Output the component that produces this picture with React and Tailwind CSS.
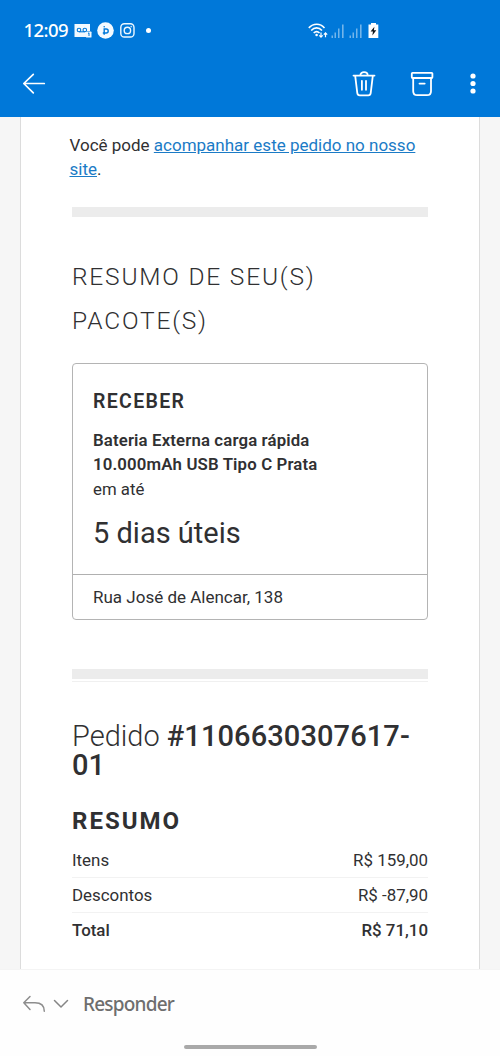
const rows = [
  { label: "Itens", value: "R$ 159,00" },
  { label: "Descontos", value: "R$ -87,90" },
];

function SignalIcon() {
  return (
    <svg className="h-[14px] w-[14px]" viewBox="0 0 14 14" fill="#fff" fillOpacity="0.45">
      <rect x="0.5" y="11.5" width="1.5" height="2.5" />
      <rect x="3.5" y="8.5" width="1.5" height="5.5" />
      <rect x="7" y="4.5" width="1.5" height="9.5" />
      <rect x="11" y="0.5" width="1.6" height="13.5" />
    </svg>
  );
}

function StatusBar() {
  return (
    <div className="flex h-[61px] items-center pl-[23.5px] text-white">
      <span className="-mt-[2px] w-[50.5px] font-['Noto_Sans',sans-serif] text-[18.5px] font-medium leading-6 tracking-[-0.6px]">12:09</span>
      <svg className="h-[15px] w-[18px]" viewBox="0 0 18 15">
        <path d="M0.5 1H16V8H12V14H0.5Z" fill="#f1f9ff" />
        <g fill="none" stroke="#0078d9" strokeWidth="1.1">
          <circle cx="5" cy="7" r="1.8" />
          <circle cx="10.8" cy="7" r="1.8" />
          <path d="M5 8.8H10.8" />
        </g>
        <rect x="12" y="8.6" width="5.5" height="6" rx="0.7" fill="#f1f9ff" />
        <path d="M14 10.5L15 9.8V13" fill="none" stroke="#0078d9" strokeWidth="1" />
      </svg>
      <svg className="ml-[4.5px] h-[17px] w-[17px]" viewBox="0 0 17 17">
        <circle cx="8.5" cy="8.5" r="8.3" fill="#f4faff" />
        <path d="M7.2 12.8V7H9.2a2 2 0 0 1 0 4H7.2M7.2 11H5.8" fill="none" stroke="#0078d9" strokeWidth="1.4" />
        <circle cx="7.2" cy="4.8" r="0.8" fill="#0078d9" />
      </svg>
      <svg className="ml-[6px] h-[15px] w-[15px]" viewBox="0 0 15 15" fill="none" stroke="#eef8ff" strokeWidth="1.4">
        <rect x="0.8" y="0.8" width="13.2" height="13.2" rx="3.6" />
        <circle cx="7.4" cy="7.4" r="3.2" />
        <circle cx="11.2" cy="3.7" r="0.4" strokeWidth="0.9" />
      </svg>
      <span className="ml-[11.5px] h-[5px] w-[5px] rounded-full bg-white" />
      <svg className="ml-[156.5px] h-[16px] w-[20px]" viewBox="0 0 20 16">
        <g fill="none" stroke="#fff" strokeWidth="1.6">
          <path d="M0.8 4.9C5.2 0 12.3 0 16.5 4.9" />
          <path d="M3.2 7.5C6.4 4 10.8 4 14 7.5" />
          <path d="M5.7 10C7.7 8 9.5 8 11.5 10" />
        </g>
        <circle cx="8.6" cy="12" r="1.3" fill="#fff" />
        <path d="M13 9.5V14M11.3 12.4L13 14.2L14.7 12.4M17.5 14.3V10M15.8 11.6L17.5 9.8L19.2 11.6" fill="none" stroke="#fff" strokeWidth="1.2" />
      </svg>
      <div className="ml-[3px] flex items-center gap-1">
        <SignalIcon />
        <SignalIcon />
      </div>
      <svg className="ml-[5px] h-[15px] w-[11px]" viewBox="0 0 11 15">
        <path d="M3 0H8V1.5H10.3V15H0.5V1.5H3Z" fill="#fff" />
        <path d="M6.4 3.7L2.6 8.5H5L4.3 12.4L8.3 7.3H5.9Z" fill="#10161c" />
      </svg>
    </div>
  );
}

function Toolbar() {
  return (
    <div className="flex h-14 items-start justify-between pl-[22px] pr-[24px] pt-[9px] text-white">
      <svg className="mt-[3px] h-[22px] w-6" viewBox="0 0 24 22" fill="none" stroke="currentColor" strokeWidth="1.7" strokeLinecap="round" strokeLinejoin="round">
        <path d="M22.3 10.5H1.8M11.3 1.3L1.8 10.5L11.3 19.8" />
      </svg>
      <div className="flex items-start">
        <svg className="h-[28px] w-[24px]" viewBox="0 0 24 28" fill="none" stroke="currentColor" strokeWidth="1.8" strokeLinecap="round" strokeLinejoin="round">
          <path d="M1.5 5.6H22.5M3.2 5.8L5.3 23.2Q5.6 25.3 7.7 25.3H16.3Q18.4 25.3 18.7 23.2L20.8 5.8M8.3 5.4C8.3 1 15.7 1 15.7 5.4M9.9 10.8V19.8M14 10.8V19.8" />
        </svg>
        <svg className="ml-[34px] h-[28px] w-[24px]" viewBox="0 0 24 28" fill="none" stroke="currentColor" strokeWidth="1.8" strokeLinecap="round" strokeLinejoin="round">
          <rect x="1.8" y="2.8" width="20.6" height="5.2" rx="0.7" />
          <path d="M3.2 8V21.2Q3.2 25.2 7.2 25.2H17Q21 25.2 21 21.2V8M9.5 13.6H14.7" />
        </svg>
        <svg className="ml-[36px] mt-[3px] h-[22px] w-[6px]" viewBox="0 0 6 22" fill="currentColor">
          <circle cx="3" cy="3" r="2.6" />
          <circle cx="3" cy="10.5" r="2.6" />
          <circle cx="3" cy="18" r="2.6" />
        </svg>
      </div>
    </div>
  );
}

function PackageCard() {
  return (
    <section className="mt-[21px] h-[257px] rounded-[4px] border border-[#b4b4b4]">
      <div className="h-[211px] border-b border-[#b0b0b0] pl-5 pt-[26px]">
        <h3 className="text-[19.5px] font-semibold leading-6 tracking-[1.35px]">RECEBER</h3>
        <p className="mt-[14px] text-[16.8px] font-semibold leading-[24.4px] tracking-[0.14px]">
          Bateria Externa carga rápida
          <br />
          10.000mAh USB Tipo C Prata
        </p>
        <p className="text-[16.8px] leading-[24.4px]">em até</p>
        <p className="mt-[17px] text-[29px] leading-[30px]">5 dias úteis</p>
      </div>
      <p className="pl-5 pt-[10px] text-[17px] leading-6">Rua José de Alencar, 138</p>
    </section>
  );
}

export default function App() {
  return (
    <div className="flex h-[1056px] w-[500px] flex-col overflow-hidden bg-[#f6f6f6] font-[Roboto,sans-serif] text-[#303032]">
      <header className="h-[117px] shrink-0 bg-[#0078d9]">
        <StatusBar />
        <Toolbar />
      </header>

      <main className="mx-[20px] h-[852px] shrink-0 border-x border-[#dcdcdc] bg-white pl-[51px] pr-[51px]">
        <p className="-ml-[2.5px] pt-[16px] text-[17px] leading-[24px]">
          Você pode <a className="text-[#1b7bc6] underline">acompanhar este pedido no nosso</a>
          <br />
          <a className="text-[#1b7bc6] underline">site</a>.
        </p>
        <div className="mt-[26px] h-[10px] bg-[#ececec]" />
        <h1 className="mt-[38px] text-[24.5px] font-light leading-[43.5px] tracking-[1.8px]">
          RESUMO DE SEU(S)
          <br />
          PACOTE(S)
        </h1>
        <PackageCard />
        <div className="mt-[49px] h-[10px] bg-[#ececec]" />
        <div className="mt-[2px] h-px bg-[#f0f0f0]" />
        <h2 className="mt-[40px] text-[29px] leading-[29.4px]">
          <span className="font-light">Pedido </span>
          <span className="font-medium tracking-[0.1px]">
            #1106630307617-
            <br />
            01
          </span>
        </h2>
        <h3 className="mt-[25px] text-[24px] font-bold leading-[30px] tracking-[2px]">RESUMO</h3>
        <dl className="mt-[7px] text-[16.9px]">
          {rows.map((row) => (
            <div key={row.label} className="flex h-[35px] items-center justify-between border-b border-[#f2f2f2] pt-px">
              <dt>{row.label}</dt>
              <dd>{row.value}</dd>
            </div>
          ))}
          <div className="flex h-[35px] items-center justify-between font-medium">
            <dt>Total</dt>
            <dd>R$ 71,10</dd>
          </div>
        </dl>
      </main>

      <footer className="flex flex-1 flex-col items-center border-t border-[#f4f4f4] bg-[#fefefe]">
        <div className="flex h-[68px] w-full items-center pl-[22px] text-[#6e6e6e]">
          <svg className="h-[18px] w-6" viewBox="0 0 24 18" fill="none" stroke="#8d8d8d" strokeWidth="1.5" strokeLinecap="round" strokeLinejoin="round">
            <path d="M8 1.5L1.8 7.8L8 14.5M1.8 7.8H13C18.5 7.8 22.3 10.5 22.3 16.3" />
          </svg>
          <svg className="ml-[7px] h-[10px] w-4" viewBox="0 0 16 10" fill="none" stroke="#858585" strokeWidth="1.5" strokeLinecap="round" strokeLinejoin="round">
            <path d="M1.5 1.5L8 8L14.5 1.5" />
          </svg>
          <span className="ml-[14px] font-['Noto_Sans',sans-serif] text-[19px] font-medium leading-6 tracking-[-0.8px]">Responder</span>
        </div>
        <div className="mt-[7px] h-[4px] w-[133px] rounded-full bg-[#a9a9a9]" />
      </footer>
    </div>
  );
}
